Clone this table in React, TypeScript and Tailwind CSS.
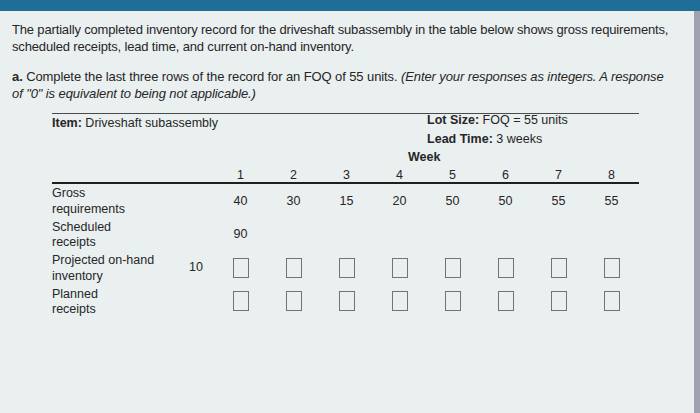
const weeks = [
  { wk: 1, gross: "40", sched: "90" },
  { wk: 2, gross: "30", sched: "" },
  { wk: 3, gross: "15", sched: "" },
  { wk: 4, gross: "20", sched: "" },
  { wk: 5, gross: "50", sched: "" },
  { wk: 6, gross: "50", sched: "" },
  { wk: 7, gross: "55", sched: "" },
  { wk: 8, gross: "55", sched: "" },
];

function Box() {
  return (
    <input
      type="text"
      aria-label="answer"
      className="h-[20px] w-[16px] border border-[#6e737c] bg-transparent outline-none"
    />
  );
}

function Row({
  label,
  initial,
  height,
  children,
}: {
  label: React.ReactNode;
  initial?: string;
  height: string;
  children: React.ReactNode;
}) {
  return (
    <div className={`grid grid-cols-[126px_36px_repeat(8,53px)] items-center ${height}`}>
      <div className="mt-[2px] leading-[15.5px]">{label}</div>
      <div className="text-center">{initial}</div>
      {children}
    </div>
  );
}

export default function App() {
  return (
    <div className="flex h-[413px] w-[700px] flex-col bg-[#eaeff0] font-['Liberation_Sans',Arial,sans-serif] text-[#262626]">
      <div className="h-[11px] bg-[#1e6e97]" />
      <div className="flex flex-1">
        <main className="flex-1">
          <section className="pl-[12px] pr-[10px] pt-[10px] text-[13px] leading-[17px] tracking-[-0.16px]">
            <p>
              The partially completed inventory record for the driveshaft subassembly in the table below shows gross requirements,
              scheduled receipts, lead time, and current on-hand inventory.
            </p>
            <p className="mt-[13px] tracking-[-0.1px]">
              <span className="font-bold">a.</span> Complete the last three rows of the record for an FOQ of 55 units.{" "}
              <i>
                (Enter your responses as integers. A response
                <br />
                of "0" is equivalent to being not applicable.)
              </i>
            </p>
          </section>

          <div className="ml-[52px] mt-[11px] w-[587px] text-[12.5px]">
            <div className="border-t border-[#4a4a4a]">
              <div className="flex">
                <div className="mt-[2px] leading-[15px]">
                  <span className="font-bold">Item:</span> Driveshaft subassembly
                </div>
                <div className="ml-[209px]">
                  <div className="h-[13px] leading-[13px]">
                    <span className="font-bold">Lot Size:</span> FOQ = 55 units
                  </div>
                  <div className="mt-[6px] h-[13px] leading-[13px]">
                    <span className="font-bold">Lead Time:</span> 3 weeks
                  </div>
                </div>
              </div>
              <div className="ml-[356px] mt-[5px] h-[13px] font-bold leading-[13px]">Week</div>
              <div className="mt-[2px] grid h-[18px] grid-cols-[126px_36px_repeat(8,53px)] items-center border-b-2 border-[#1f1f1f]">
                <div />
                <div />
                {weeks.map((w) => (
                  <div key={w.wk} className="text-center">
                    {w.wk}
                  </div>
                ))}
              </div>
            </div>

            <Row
              height="h-[33px]"
              label={
                <>
                  Gross
                  <br />
                  requirements
                </>
              }
            >
              {weeks.map((w) => (
                <div key={w.wk} className="mt-[1px] text-center">
                  {w.gross}
                </div>
              ))}
            </Row>
            <Row
              height="h-[34px]"
              label={
                <>
                  Scheduled
                  <br />
                  receipts
                </>
              }
            >
              {weeks.map((w) => (
                <div key={w.wk} className="mt-[1px] text-center">
                  {w.sched}
                </div>
              ))}
            </Row>
            <Row
              height="h-[33px]"
              initial="10"
              label={
                <>
                  Projected on-hand
                  <br />
                  inventory
                </>
              }
            >
              {weeks.map((w) => (
                <div key={w.wk} className="flex justify-center">
                  <Box />
                </div>
              ))}
            </Row>
            <Row
              height="h-[34px]"
              label={
                <>
                  Planned
                  <br />
                  receipts
                </>
              }
            >
              {weeks.map((w) => (
                <div key={w.wk} className="flex justify-center">
                  <Box />
                </div>
              ))}
            </Row>
          </div>
        </main>
        <div className="w-[6px] bg-[#9ea3af]" />
      </div>
    </div>
  );
}
